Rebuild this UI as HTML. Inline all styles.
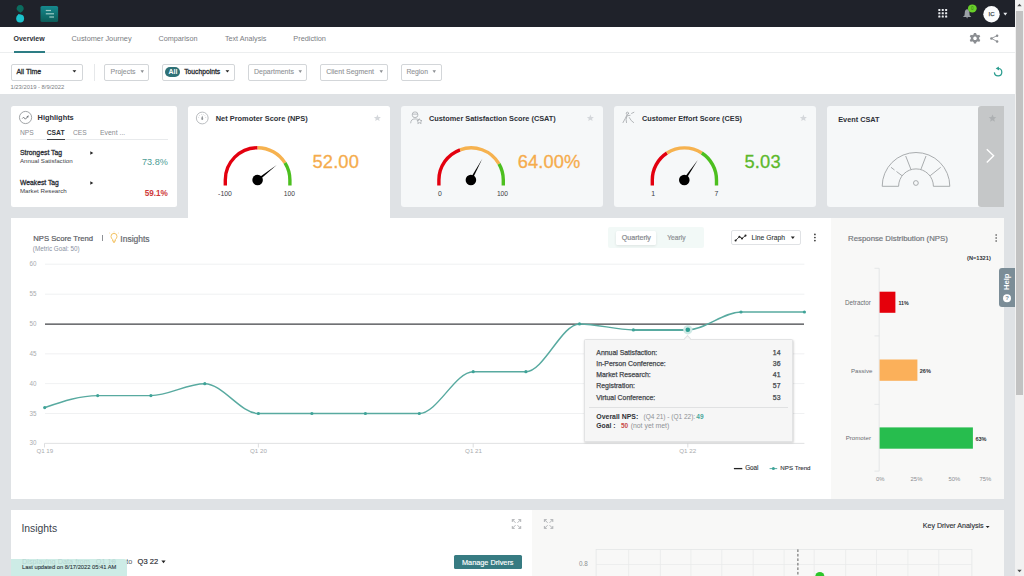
<!DOCTYPE html>
<html><head><meta charset="utf-8">
<style>
*{box-sizing:border-box;margin:0;padding:0}
html,body{width:1024px;height:576px;overflow:hidden;background:#dfe2e5;font-family:"Liberation Sans",sans-serif}
.a{position:absolute}
.t{position:absolute;white-space:nowrap;line-height:1;font-family:"Liberation Sans",sans-serif}
.b{font-weight:700}
svg{position:absolute;overflow:visible}
</style></head><body>
<!-- page area -->
<div class="a" style="left:0;top:0;width:1015px;height:576px;background:#dfe2e5"></div>
<!-- header -->
<div class="a" style="left:0;top:0;width:1015px;height:27px;background:#1f222a"></div>
<!-- logo -->
<svg style="left:0;top:0" width="70" height="27">
  <path d="M20.5,12.7 Q17.6,11.6 16.7,9.6 A3.6,3.6 0 1 1 23.6,9.6 Q23.1,11.4 20.5,12.7 Z" fill="#0b6c5f"/>
  <circle cx="20.15" cy="18.5" r="3.95" fill="#1bc2cc"/>
  <path d="M18,16 L18.2,14.1 Q20.8,14.6 22.6,15.8 Z" fill="#1bc2cc"/>
  <defs><linearGradient id="mg" x1="0" y1="0" x2="0" y2="1"><stop offset="0" stop-color="#168a8f"/><stop offset="1" stop-color="#0c5c58"/></linearGradient></defs>
  <rect x="40.5" y="5.9" width="17.6" height="16.1" rx="1.6" fill="url(#mg)"/>
  <rect x="45.8" y="9.9" width="5.2" height="1.2" fill="#9ccbc6"/>
  <rect x="45.8" y="13.2" width="8.2" height="1.2" fill="#9ccbc6"/>
  <rect x="49.3" y="16.4" width="4.7" height="1.2" fill="#9ccbc6"/>
</svg>
<!-- header right icons -->
<svg style="left:930px;top:0" width="85" height="27">
  <g fill="#e9ecef">
    <rect x="8.3" y="8.9" width="2.1" height="2.1" rx=".4"/><rect x="11.7" y="8.9" width="2.1" height="2.1" rx=".4"/><rect x="15.1" y="8.9" width="2.1" height="2.1" rx=".4"/>
    <rect x="8.3" y="12.2" width="2.1" height="2.1" rx=".4"/><rect x="11.7" y="12.2" width="2.1" height="2.1" rx=".4"/><rect x="15.1" y="12.2" width="2.1" height="2.1" rx=".4"/>
    <rect x="8.3" y="15.5" width="2.1" height="2.1" rx=".4"/><rect x="11.7" y="15.5" width="2.1" height="2.1" rx=".4"/><rect x="15.1" y="15.5" width="2.1" height="2.1" rx=".4"/>
  </g>
  <path d="M37.1,9.2 Q34.9,9.5 34.8,12.6 L34.5,15.4 Q33.4,16.3 33,17 L41.2,17 Q40.8,16.3 39.7,15.4 L39.4,12.6 Q39.3,9.5 37.1,9.2 Z M36.1,17.3 L38.1,17.3 L37.1,18.4 Z" fill="#9ba1a6"/>
  <ellipse cx="42.3" cy="8.4" rx="4.4" ry="4" fill="#68cf29"/>
  <text x="42.3" y="10.1" font-size="4.6" text-anchor="middle" fill="#3a7a1c" font-family="Liberation Sans">0</text>
  <circle cx="61.5" cy="14.2" r="8.2" fill="#fbfcfd"/>
  <text x="61.5" y="15.9" font-size="6" text-anchor="middle" fill="#3d4a50" stroke="#3d4a50" stroke-width=".25" font-family="Liberation Sans">IC</text>
  <path d="M73.3,12.8 L77.3,12.8 L75.3,15.6 Z" fill="#e9ecef"/>
</svg>
<!-- nav bar -->
<div class="a" style="left:0;top:27px;width:1015px;height:67px;background:#fff"></div>
<div class="a" style="left:0;top:52px;width:1015px;height:1px;background:#eceeef"></div>
<div class="t b" style="left:13.5px;top:34.9px;font-size:7px;color:#2c2f36">Overview</div>
<div class="a" style="left:13.5px;top:51px;width:31.5px;height:1.8px;background:#2d7d84"></div>
<div class="t" style="left:71.5px;top:34.6px;font-size:7.36px;color:#7a7d82">Customer Journey</div>
<div class="t" style="left:158.4px;top:34.6px;font-size:7.25px;color:#7a7d82">Comparison</div>
<div class="t" style="left:224.9px;top:35.1px;font-size:7.2px;color:#7a7d82">Text Analysis</div>
<div class="t" style="left:293.3px;top:34.6px;font-size:7.35px;color:#7a7d82">Prediction</div>
<!-- gear & share -->
<svg style="left:965px;top:30px" width="40" height="18">
  <g transform="translate(10,8.3)">
    <path fill="#8b8e92" d="M-1.1,-5.3 L1.1,-5.3 L1.4,-3.8 Q2.2,-3.5 2.8,-3 L4.2,-3.6 L5.3,-1.7 L4.1,-0.7 Q4.2,0 4.1,0.7 L5.3,1.7 L4.2,3.6 L2.8,3 Q2.2,3.5 1.4,3.8 L1.1,5.3 L-1.1,5.3 L-1.4,3.8 Q-2.2,3.5 -2.8,3 L-4.2,3.6 L-5.3,1.7 L-4.1,0.7 Q-4.2,0 -4.1,-0.7 L-5.3,-1.7 L-4.2,-3.6 L-2.8,-3 Q-2.2,-3.5 -1.4,-3.8 Z M0,-1.8 A1.8,1.8 0 1 0 0.01,-1.8 Z" fill-rule="evenodd"/>
  </g>
  <g fill="#8b8e92" stroke="#8b8e92">
    <line x1="26.4" y1="8.4" x2="32.1" y2="5.7" stroke-width="0.85"/>
    <line x1="26.4" y1="8.4" x2="32.1" y2="11.5" stroke-width="0.85"/>
    <circle cx="26.4" cy="8.4" r="1.25" stroke="none"/>
    <circle cx="32.1" cy="5.7" r="1.25" stroke="none"/>
    <circle cx="32.1" cy="11.5" r="1.25" stroke="none"/>
  </g>
</svg>
<!-- filters -->
<div class="a" style="left:10.5px;top:63.5px;width:72px;height:17px;border:1px solid #d3d6d9;border-radius:2px;background:#fff"></div>
<div class="t" style="left:16.4px;top:69px;font-size:6.95px;color:#2a2d32;-webkit-text-stroke:.3px #2a2d32">All Time</div>
<svg style="left:72px;top:69px" width="6" height="5"><path d="M0.5,1.2 L4.3,1.2 L2.4,3.6 Z" fill="#222"/></svg>
<div class="a" style="left:93.5px;top:63.5px;width:1px;height:17px;background:#e6e8ea"></div>
<div class="a" style="left:104.3px;top:63.5px;width:44.7px;height:17px;border:1px solid #d3d6d9;border-radius:2px"></div>
<div class="t" style="left:110.6px;top:69.2px;font-size:6.9px;color:#8f9296;-webkit-text-stroke:.1px #8f9296">Projects</div>
<svg style="left:139.8px;top:69.3px" width="6" height="5"><path d="M0.5,1.3 L4,1.3 L2.25,3.9 Z" fill="#8d9094"/></svg>
<div class="a" style="left:162.2px;top:63.5px;width:72.8px;height:17px;border:1px solid #d3d6d9;border-radius:2px"></div>
<div class="a" style="left:165.1px;top:66.6px;width:14.8px;height:10.2px;border-radius:5.1px;background:#2e7176"></div>
<div class="t b" style="left:168.5px;top:68.6px;font-size:6.9px;color:#fff">All</div>
<div class="t" style="left:184.2px;top:69px;font-size:6.75px;color:#2a2d32;-webkit-text-stroke:.3px #2a2d32">Touchpoints</div>
<svg style="left:225px;top:69px" width="6" height="5"><path d="M0.5,1.2 L4.3,1.2 L2.4,3.6 Z" fill="#222"/></svg>
<div class="a" style="left:248.2px;top:63.5px;width:59.3px;height:17px;border:1px solid #d3d6d9;border-radius:2px"></div>
<div class="t" style="left:254px;top:69.2px;font-size:6.97px;color:#8f9296;-webkit-text-stroke:.1px #8f9296">Departments</div>
<svg style="left:298.3px;top:69.3px" width="6" height="5"><path d="M0.5,1.3 L4,1.3 L2.25,3.9 Z" fill="#8d9094"/></svg>
<div class="a" style="left:320.4px;top:63.5px;width:67.2px;height:17px;border:1px solid #d3d6d9;border-radius:2px"></div>
<div class="t" style="left:326.2px;top:68.4px;font-size:7px;color:#8f9296;-webkit-text-stroke:.1px #8f9296">Client Segment</div>
<svg style="left:378.7px;top:69.3px" width="6" height="5"><path d="M0.5,1.3 L4,1.3 L2.25,3.9 Z" fill="#8d9094"/></svg>
<div class="a" style="left:400.5px;top:63.5px;width:41px;height:17px;border:1px solid #d3d6d9;border-radius:2px"></div>
<div class="t" style="left:406.4px;top:69.2px;font-size:6.8px;color:#8f9296;-webkit-text-stroke:.1px #8f9296">Region</div>
<svg style="left:432.3px;top:69.3px" width="6" height="5"><path d="M0.5,1.3 L4,1.3 L2.25,3.9 Z" fill="#8d9094"/></svg>
<div class="t" style="left:10.5px;top:85.1px;font-size:5.84px;color:#7b7e83">1/23/2019 - 8/9/2022</div>
<!-- refresh -->
<svg style="left:990px;top:63px" width="16" height="16">
  <path d="M4.4,9.4 A3.7,3.7 0 1 0 8.3,5.5" fill="none" stroke="#2a9d8f" stroke-width="1.25"/>
  <path d="M5.7,5.5 L8.8,3.5 L9.1,7.6 Z" fill="#2a9d8f"/>
</svg>

<!-- Highlights card -->
<div class="a" style="left:11px;top:106px;width:166px;height:100.5px;background:#fff;border-radius:2.5px"></div>
<svg style="left:11px;top:106px" width="30" height="30">
  <circle cx="14.55" cy="11.5" r="6.1" fill="none" stroke="#8a8e92" stroke-width="0.8"/>
  <path d="M11.3,12.5 L12.6,11.2 L14.4,13.2 L16.4,11" fill="none" stroke="#6a6e73" stroke-width="0.9"/>
  <path d="M15.5,10.6 L17.8,9.2 L17.1,11.7 Z" fill="#6a6e73"/>
</svg>
<div class="t b" style="left:37.6px;top:113.6px;font-size:7.4px;color:#2e3138">Highlights</div>
<div class="t" style="left:20px;top:129.8px;font-size:6.66px;color:#8a8d91">NPS</div>
<div class="t b" style="left:46.7px;top:129.8px;font-size:6.76px;color:#2e3138">CSAT</div>
<div class="t" style="left:73px;top:129.8px;font-size:6.66px;color:#8a8d91">CES</div>
<div class="t" style="left:100px;top:129.8px;font-size:6.9px;color:#8a8d91">Event ...</div>
<div class="a" style="left:20px;top:139.3px;width:148.4px;height:0.8px;background:#e8eaec"></div>
<div class="a" style="left:46.7px;top:138.9px;width:18.2px;height:1.3px;background:#3a3d42"></div>
<div class="t" style="left:20px;top:150px;font-size:6.85px;color:#2e3138;-webkit-text-stroke:.3px #2e3138">Strongest Tag</div>
<div class="t" style="left:20px;top:157.5px;font-size:6.15px;color:#3e4147">Annual Satisfaction</div>
<svg style="left:89px;top:149px" width="6" height="7"><path d="M1.3,2.3 L4.3,4 L1.3,5.8 Z" fill="#222"/></svg>
<div class="t" style="left:142px;top:158px;font-size:9.1px;color:#4b9d95">73.8%</div>
<div class="t" style="left:20px;top:179.8px;font-size:6.75px;color:#2e3138;-webkit-text-stroke:.3px #2e3138">Weakest Tag</div>
<div class="t" style="left:20px;top:187.9px;font-size:6.15px;color:#3e4147">Market Research</div>
<svg style="left:89px;top:179px" width="6" height="7"><path d="M1.3,2.3 L4.3,4 L1.3,5.8 Z" fill="#222"/></svg>
<div class="t" style="left:144.7px;top:190.4px;font-size:8.2px;color:#cf3a3a;font-weight:700">59.1%</div>

<!-- NPS card (selected, merges to panel) -->
<div class="a" style="left:188px;top:105.6px;width:202.3px;height:113px;background:#fff;border-radius:2.5px 2.5px 0 0"></div>
<svg style="left:188px;top:106px" width="30" height="30">
  <circle cx="14.25" cy="12" r="5.9" fill="none" stroke="#a9adb1" stroke-width="0.8"/>
  <path d="M14.25,9.4 Q15.4,12.2 15.2,13.1 A0.95,0.95 0 0 1 13.3,13.1 Q13.1,12.2 14.25,9.4 Z" fill="#8f9397"/>
  <g fill="#b4b8bc"><circle cx="10.7" cy="11.3" r=".45"/><circle cx="11.6" cy="9.6" r=".45"/><circle cx="13.3" cy="8.4" r=".45"/><circle cx="15.2" cy="8.4" r=".45"/><circle cx="16.9" cy="9.6" r=".45"/><circle cx="17.8" cy="11.3" r=".45"/></g>
</svg>
<div class="t b" style="left:215.7px;top:114.9px;font-size:7.43px;color:#2e3138">Net Promoter Score (NPS)</div>
<svg style="left:370px;top:110px" width="15" height="15"><path d="M7.4,4.6 L8.4,6.9 L10.9,7.1 L9,8.7 L9.6,11.1 L7.4,9.8 L5.2,11.1 L5.8,8.7 L3.9,7.1 L6.4,6.9 Z" fill="#d4d7db"/></svg>
<!-- NPS gauge: center 257.6,180 r=32.3 (centerline) -->
<svg style="left:0;top:0" width="400" height="220">
  <g fill="none" stroke-width="3.4">
    <path d="M225.3,185.6 L225.3,180 A32.3,32.3 0 0 1 257.6,147.7" stroke="#e3000f"/>
    <path d="M257.6,147.7 A32.3,32.3 0 0 1 285,162.9" stroke="#f6b24f"/>
    <path d="M285,162.9 A32.3,32.3 0 0 1 289.9,180 L289.9,185.6" stroke="#4cbf1f"/>
  </g>
  <path d="M256.9,179 L276.7,165 L258.3,181 Z" fill="#000"/>
  <circle cx="257.6" cy="180" r="5.3" fill="#000"/>
</svg>
<div class="t" style="left:218.1px;top:190.6px;font-size:6.9px;color:#3b3e44">-100</div>
<div class="t" style="left:283.7px;top:190.6px;font-size:6.7px;color:#3b3e44">100</div>
<div class="t" style="left:312.5px;top:153.2px;font-size:18.3px;letter-spacing:.15px;color:#f5ac4c;-webkit-text-stroke:.3px #f5ac4c">52.00</div>

<!-- CSAT card -->
<div class="a" style="left:401px;top:105.6px;width:202px;height:101px;background:#f6f8f9;border-radius:3px"></div>
<svg style="left:401px;top:106px" width="30" height="30">
  <g fill="none" stroke="#a3a7ab" stroke-width="0.75">
    <path d="M11.3,8.2 Q11.3,5.9 14,5.9 Q16.8,5.9 16.8,8.2 L16.8,9.3 Q16.8,11.6 14,11.6 Q11.3,11.6 11.3,9.3 Z"/>
    <path d="M11.3,8.1 L16.8,8.1"/>
    <path d="M9.7,17.3 Q9.7,13 14,12.9 Q16.5,12.9 18,13.8"/>
    <path d="M18.4,12.7 L19.2,14.4 L21,14.6 L19.7,15.8 L20.1,17.6 L18.4,16.7 L16.8,17.6 L17.2,15.8 L15.9,14.6 L17.7,14.4 Z"/>
  </g>
</svg>
<div class="t b" style="left:429px;top:114.9px;font-size:7.35px;color:#2e3138">Customer Satisfaction Score (CSAT)</div>
<svg style="left:583px;top:110px" width="15" height="15"><path d="M7.4,4.6 L8.4,6.9 L10.9,7.1 L9,8.7 L9.6,11.1 L7.4,9.8 L5.2,11.1 L5.8,8.7 L3.9,7.1 L6.4,6.9 Z" fill="#d4d7db"/></svg>
<svg style="left:0;top:0" width="620" height="220">
  <g fill="none" stroke-width="3.4">
    <path d="M438.9,185.6 L438.9,180 A32.2,32.2 0 0 1 460.1,149.8" stroke="#e3000f"/>
    <path d="M460.1,149.8 A32.2,32.2 0 0 1 499,163.9" stroke="#f6b24f"/>
    <path d="M499,163.9 A32.2,32.2 0 0 1 503.3,180 L503.3,185.6" stroke="#4cbf1f"/>
  </g>
  <path d="M469.8,179.4 L482.3,158.7 L471.8,180.6 Z" fill="#000"/>
  <circle cx="470.9" cy="180" r="5.3" fill="#000"/>
</svg>
<div class="t" style="left:438px;top:190.6px;font-size:6.9px;color:#3b3e44">0</div>
<div class="t" style="left:496.9px;top:190.6px;font-size:6.7px;color:#3b3e44">100</div>
<div class="t" style="left:517.8px;top:153.2px;font-size:18.3px;letter-spacing:.1px;color:#f5ac4c;-webkit-text-stroke:.3px #f5ac4c">64.00%</div>

<!-- CES card -->
<div class="a" style="left:614px;top:105.6px;width:202px;height:101px;background:#f6f8f9;border-radius:3px"></div>
<svg style="left:614px;top:106px" width="30" height="30">
  <g fill="none" stroke="#a6aaae" stroke-width="0.85" stroke-linecap="round">
    <circle cx="13.4" cy="7.3" r="1.15"/>
    <path d="M13,8.9 L11.2,12.6 L9,16.6 M12.9,10.2 L12.1,13.3 L12.5,16.6 M13.3,9.8 L16.1,9.3 M17.6,7.4 L19.9,6.3 M15.3,11.6 Q16.9,15.1 19.6,16.6"/>
  </g>
</svg>
<div class="t b" style="left:642px;top:114.9px;font-size:7.32px;color:#2e3138">Customer Effort Score (CES)</div>
<svg style="left:796px;top:110px" width="15" height="15"><path d="M7.4,4.6 L8.4,6.9 L10.9,7.1 L9,8.7 L9.6,11.1 L7.4,9.8 L5.2,11.1 L5.8,8.7 L3.9,7.1 L6.4,6.9 Z" fill="#d4d7db"/></svg>
<svg style="left:0;top:0" width="830" height="220">
  <g fill="none" stroke-width="3.4">
    <path d="M652.3,185.6 L652.3,180 A32.1,32.1 0 0 1 667,153" stroke="#e3000f"/>
    <path d="M667,153 A32.1,32.1 0 0 1 701.8,153" stroke="#f6b24f"/>
    <path d="M701.8,153 A32.1,32.1 0 0 1 716.5,180 L716.5,185.6" stroke="#4cbf1f"/>
  </g>
  <path d="M683.2,179.3 L697.8,160 L685.1,180.7 Z" fill="#000"/>
  <circle cx="684.3" cy="180" r="5.3" fill="#000"/>
</svg>
<div class="t" style="left:651.3px;top:190.6px;font-size:6.9px;color:#3b3e44">1</div>
<div class="t" style="left:714.6px;top:190.6px;font-size:6.9px;color:#3b3e44">7</div>
<div class="t" style="left:744.4px;top:153.2px;font-size:18.3px;letter-spacing:.2px;color:#5cb82b;-webkit-text-stroke:.3px #5cb82b">5.03</div>

<!-- Event CSAT card -->
<div class="a" style="left:827px;top:105.8px;width:177px;height:101px;background:#f6f8f9;border-radius:3px 0 0 3px"></div>
<div class="a" style="left:978px;top:105.8px;width:25.8px;height:101px;background:#c5c7c8;border-radius:3px 0 0 3px"></div>
<div class="t b" style="left:838.2px;top:115.8px;font-size:7.33px;color:#2e3138">Event CSAT</div>
<svg style="left:985px;top:111px" width="15" height="15"><path d="M7.5,3.6 L8.6,6.1 L11.3,6.3 L9.2,8.1 L9.9,10.7 L7.5,9.3 L5.1,10.7 L5.8,8.1 L3.7,6.3 L6.4,6.1 Z" fill="#adb0b2"/></svg>
<svg style="left:980px;top:145px" width="20" height="20"><path d="M6.8,4.2 L13.6,10.8 L6.8,17.4" fill="none" stroke="#fff" stroke-width="1.4"/></svg>
<svg style="left:0;top:0" width="1000" height="220">
  <g fill="none" stroke="#9b9ea1" stroke-width="0.85">
    <path d="M882.2,186.3 A33.8,33.8 0 0 1 949.8,186.3 L933.4,186.3 A17.4,17.4 0 0 0 898.6,186.3 Z"/>
    <circle cx="915.9" cy="183" r="2.4"/>
    <path d="M891,167.3 L894.5,170 M896.5,171.5 L902,175.7"/>
    <path d="M905.7,156 L911,169.6"/>
    <path d="M926,156 L920.8,169.6"/>
    <path d="M940.7,167.3 L930.2,175.7"/>
  </g>
</svg>

<!-- Chart panel -->
<div class="a" style="left:11px;top:217.5px;width:993px;height:281px;background:#fff"></div>
<div class="a" style="left:830.8px;top:217.5px;width:173.2px;height:281px;background:#f8f8f7"></div>
<div class="t" style="left:33.3px;top:235.4px;font-size:7.7px;color:#5d6066;-webkit-text-stroke:.22px #5d6066">NPS Score Trend</div>
<div class="a" style="left:101.9px;top:235.1px;width:0.9px;height:5.9px;background:#8e9196"></div>
<svg style="left:108px;top:230px" width="14" height="14">
  <g fill="none" stroke="#f0b43c" stroke-width="0.8">
    <path d="M4.7,9.6 Q3,8.2 3,6.4 A3,3 0 0 1 9,6.4 Q9,8.2 7.3,9.6 L7.3,11.2 L4.7,11.2 Z"/>
    <path d="M5,12.2 L7,12.2"/>
    <path d="M1.3,2.9 L2.1,3.5 M6,1.6 L6,2.3 M10.7,2.9 L9.9,3.5" stroke-width="0.6"/>
  </g>
</svg>
<div class="t" style="left:120.3px;top:234.7px;font-size:8.5px;color:#686b70;-webkit-text-stroke:.22px #686b70">Insights</div>
<div class="t" style="left:32.8px;top:245.5px;font-size:6.3px;color:#8a92a2">(Metric Goal: 50)</div>
<!-- toggle -->
<div class="a" style="left:608.2px;top:227px;width:95.6px;height:21px;background:#f2f9f7;border-radius:2px"></div>
<div class="a" style="left:616px;top:230.5px;width:40.2px;height:14.8px;background:#fff;border-radius:1.5px;box-shadow:0 1px 3px rgba(0,0,0,0.09)"></div>
<div class="t" style="left:621.8px;top:234.6px;font-size:7.08px;color:#86898d;-webkit-text-stroke:.2px #86898d">Quarterly</div>
<div class="t" style="left:667.3px;top:234.6px;font-size:6.63px;color:#8e9195;-webkit-text-stroke:.2px #8e9195">Yearly</div>
<!-- line graph dropdown -->
<div class="a" style="left:730.5px;top:230px;width:70.1px;height:15.3px;border:0.8px solid #e0e2e5;border-radius:2px;background:#fff"></div>
<svg style="left:733px;top:233px" width="16" height="10">
  <path d="M2.6,7.5 L6.4,3.7 L9,5.5 L12.5,2.6" fill="none" stroke="#222" stroke-width="0.85"/>
  <g fill="#222"><circle cx="2.6" cy="7.5" r="1.05"/><circle cx="6.4" cy="3.7" r="1.05"/><circle cx="9" cy="5.5" r="1.05"/><circle cx="12.5" cy="2.6" r="1.05"/></g>
</svg>
<div class="t" style="left:751.6px;top:235.2px;font-size:6.77px;color:#2b2e33;-webkit-text-stroke:.08px #2b2e33">Line Graph</div>
<svg style="left:789px;top:235px" width="8" height="6"><path d="M1.8,1.6 L5.8,1.6 L3.8,4 Z" fill="#222"/></svg>
<svg style="left:812px;top:232px" width="6" height="12"><g fill="#333"><circle cx="2.9" cy="2.4" r=".85"/><circle cx="2.9" cy="5.5" r=".85"/><circle cx="2.9" cy="8.6" r=".85"/></g></svg>

<!-- line chart -->
<svg style="left:0;top:0" width="830" height="500">
  <g stroke="#eceeef" stroke-width="0.8">
    <line x1="45" y1="264.2" x2="804.4" y2="264.2"/>
    <line x1="45" y1="294.2" x2="804.4" y2="294.2"/>
    <line x1="45" y1="353.8" x2="804.4" y2="353.8"/>
    <line x1="45" y1="383.6" x2="804.4" y2="383.6"/>
    <line x1="45" y1="413.5" x2="804.4" y2="413.5"/>
  </g>
  <line x1="44.5" y1="443.4" x2="804.4" y2="443.4" stroke="#dcdee0" stroke-width="0.9"/>
  <g stroke="#d4d6d8" stroke-width="0.8">
    <line x1="44.5" y1="443.4" x2="44.5" y2="447.5"/>
    <line x1="258.4" y1="443.4" x2="258.4" y2="447.5"/>
    <line x1="473.2" y1="443.4" x2="473.2" y2="447.5"/>
    <line x1="687.8" y1="443.4" x2="687.8" y2="447.5"/>
  </g>
  <line x1="45" y1="324.1" x2="804" y2="324.1" stroke="#404246" stroke-width="1.2"/>
  <path d="M44.7,407.6 C62.4,401.6 80.0,395.6 97.7,395.6 C115.4,395.6 133.2,395.6 150.9,395.6 C168.9,395.6 186.8,383.7 204.8,383.7 C222.7,383.7 240.5,413.5 258.4,413.5 C276.2,413.5 294.1,413.5 311.9,413.5 C329.7,413.5 347.6,413.5 365.4,413.5 C383.4,413.5 401.3,413.5 419.3,413.5 C437.3,413.5 455.2,371.7 473.2,371.7 C490.8,371.7 508.3,371.7 525.9,371.7 C543.8,371.7 561.6,323.9 579.5,323.9 C597.5,323.9 615.4,329.9 633.4,329.9 C651.5,329.9 669.7,329.9 687.8,329.9 C705.5,329.9 723.3,312.0 741.0,312.0 C762.1,312.0 783.3,312.0 804.4,312.0" fill="none" stroke="#58aaa0" stroke-width="1.45"/>
  <path d="M633.4,329.9 L687.8,329.9" stroke="#58aaa0" stroke-width="2"/>
  <g fill="#3fa398">
    <circle cx="44.7" cy="407.6" r="1.6"/><circle cx="97.7" cy="395.6" r="1.6"/><circle cx="150.9" cy="395.6" r="1.6"/><circle cx="204.8" cy="383.7" r="1.6"/><circle cx="258.4" cy="413.5" r="1.6"/><circle cx="311.9" cy="413.5" r="1.6"/><circle cx="365.4" cy="413.5" r="1.6"/><circle cx="419.3" cy="413.5" r="1.6"/><circle cx="473.2" cy="371.7" r="1.6"/><circle cx="525.9" cy="371.7" r="1.6"/><circle cx="579.5" cy="323.9" r="1.6"/><circle cx="633.4" cy="329.9" r="1.6"/><circle cx="741" cy="312" r="1.6"/><circle cx="804.4" cy="312" r="1.6"/>
  </g>
  <circle cx="687.8" cy="329.8" r="4.6" fill="#cfe9e5"/>
  <circle cx="687.8" cy="329.8" r="2.3" fill="#2d9f92"/>
  <!-- legend -->
  <line x1="733.9" y1="468.6" x2="742.3" y2="468.6" stroke="#222" stroke-width="1.3"/>
  <line x1="769.6" y1="468.6" x2="777.2" y2="468.6" stroke="#4aa79d" stroke-width="0.9"/>
  <circle cx="773.4" cy="468.6" r="1.5" fill="#3fa398"/>
</svg>
<!-- y labels -->
<div class="t" style="left:29.4px;top:261.3px;font-size:6.3px;color:#a9abae;letter-spacing:.2px">60</div>
<div class="t" style="left:29.4px;top:291.3px;font-size:6.3px;color:#a9abae;letter-spacing:.2px">55</div>
<div class="t" style="left:29.4px;top:321.2px;font-size:6.3px;color:#a9abae;letter-spacing:.2px">50</div>
<div class="t" style="left:29.4px;top:351px;font-size:6.3px;color:#a9abae;letter-spacing:.2px">45</div>
<div class="t" style="left:29.4px;top:380.8px;font-size:6.3px;color:#a9abae;letter-spacing:.2px">40</div>
<div class="t" style="left:29.4px;top:410.6px;font-size:6.3px;color:#a9abae;letter-spacing:.2px">35</div>
<div class="t" style="left:29.4px;top:440.4px;font-size:6.3px;color:#a9abae;letter-spacing:.2px">30</div>
<div class="t" style="left:36.4px;top:448.2px;font-size:6.2px;color:#a9abae">Q1 19</div>
<div class="t" style="left:250px;top:448.2px;font-size:6.2px;color:#a9abae">Q1 20</div>
<div class="t" style="left:465.1px;top:448.2px;font-size:6.2px;color:#a9abae">Q1 21</div>
<div class="t" style="left:679.3px;top:448.2px;font-size:6.2px;color:#a9abae">Q1 22</div>
<div class="t" style="left:745.2px;top:465.4px;font-size:6.4px;letter-spacing:-.05px;color:#34373c;-webkit-text-stroke:.12px #34373c">Goal</div>
<div class="t" style="left:780.3px;top:465.4px;font-size:6.2px;color:#34373c;-webkit-text-stroke:.12px #34373c">NPS Trend</div>

<!-- tooltip -->
<div class="a" style="left:584px;top:338.5px;width:209.3px;height:103px;background:#f6f6f6;border:0.8px solid #e2e3e4;border-radius:1.5px;box-shadow:0.5px 1px 2px rgba(0,0,0,0.15)"></div>
<div class="a" style="left:685px;top:336px;width:5px;height:5px;background:#f6f6f6;transform:rotate(45deg);border-left:0.8px solid #e2e3e4;border-top:0.8px solid #e2e3e4"></div>
<div class="t" style="left:596.3px;top:349.8px;font-size:6.9px;color:#45484d;-webkit-text-stroke:.25px #45484d">Annual Satisfaction:</div>
<div class="t" style="left:596.3px;top:361px;font-size:6.9px;color:#45484d;-webkit-text-stroke:.25px #45484d">In-Person Conference:</div>
<div class="t" style="left:596.3px;top:372px;font-size:6.9px;color:#45484d;-webkit-text-stroke:.25px #45484d">Market Research:</div>
<div class="t" style="left:596.3px;top:383.2px;font-size:6.9px;color:#45484d;-webkit-text-stroke:.25px #45484d">Registration:</div>
<div class="t" style="left:596.3px;top:394.5px;font-size:6.9px;color:#45484d;-webkit-text-stroke:.25px #45484d">Virtual Conference:</div>
<div class="t" style="left:770px;top:349.8px;width:10.5px;text-align:right;font-size:6.9px;color:#45484d;-webkit-text-stroke:.25px #45484d">14</div>
<div class="t" style="left:770px;top:361px;width:10.5px;text-align:right;font-size:6.9px;color:#45484d;-webkit-text-stroke:.25px #45484d">36</div>
<div class="t" style="left:770px;top:372px;width:10.5px;text-align:right;font-size:6.9px;color:#45484d;-webkit-text-stroke:.25px #45484d">41</div>
<div class="t" style="left:770px;top:383.2px;width:10.5px;text-align:right;font-size:6.9px;color:#45484d;-webkit-text-stroke:.25px #45484d">57</div>
<div class="t" style="left:770px;top:394.5px;width:10.5px;text-align:right;font-size:6.9px;color:#45484d;-webkit-text-stroke:.25px #45484d">53</div>
<div class="a" style="left:588.9px;top:407px;width:199px;height:0.8px;background:#e0e1e2"></div>
<div class="t b" style="left:596.3px;top:413.9px;font-size:6.93px;color:#2f3237">Overall NPS:</div>
<div class="t" style="left:643.5px;top:414.3px;font-size:6.5px;color:#8e9195">(Q4 21) - (Q1 22):</div>
<div class="t b" style="left:696.3px;top:414.3px;font-size:6.5px;color:#49a69b">49</div>
<div class="t b" style="left:596.3px;top:423.1px;font-size:6.74px;color:#2f3237">Goal :</div>
<div class="t b" style="left:621px;top:423.3px;font-size:6.5px;color:#c94a4a">50</div>
<div class="t" style="left:630.7px;top:423.3px;font-size:6.88px;color:#8e9195">(not yet met)</div>

<!-- Response distribution -->
<div class="t" style="left:848.1px;top:235.3px;font-size:7.8px;color:#74777c;-webkit-text-stroke:.2px #74777c">Response Distribution (NPS)</div>
<svg style="left:990px;top:232px" width="12" height="12"><g fill="#333"><circle cx="6.1" cy="3.1" r=".75"/><circle cx="6.1" cy="6.1" r=".75"/><circle cx="6.1" cy="9.1" r=".75"/></g></svg>
<div class="t b" style="left:967.1px;top:256.3px;font-size:5.65px;color:#2e3136">(N=1321)</div>
<svg style="left:830px;top:260px" width="180" height="240">
  <line x1="49.2" y1="8.3" x2="49.2" y2="211.1" stroke="#e0e2e4" stroke-width="0.8"/>
  <g stroke="#e0e2e4" stroke-width="0.8">
    <line x1="44.5" y1="8.3" x2="49.2" y2="8.3"/>
    <line x1="44.5" y1="75.9" x2="49.2" y2="75.9"/>
    <line x1="44.5" y1="144.4" x2="49.2" y2="144.4"/>
    <line x1="44.5" y1="211.1" x2="49.2" y2="211.1"/>
  </g>
  <rect x="49.6" y="31.7" width="15.8" height="21.1" fill="#e5000b"/>
  <rect x="49.6" y="99.5" width="37.8" height="21.3" fill="#fbb05a"/>
  <rect x="49.6" y="167.4" width="93.3" height="21.3" fill="#27bd4e"/>
</svg>
<div class="t" style="left:845px;top:299.6px;font-size:6.3px;color:#6a6d72">Detractor</div>
<div class="t" style="left:851px;top:367.6px;font-size:6.1px;color:#6a6d72">Passive</div>
<div class="t" style="left:845.7px;top:435.2px;font-size:6.15px;color:#6a6d72">Promoter</div>
<div class="t b" style="left:898.4px;top:301.1px;font-size:5.3px;color:#2e3136">11%</div>
<div class="t b" style="left:919.8px;top:369px;font-size:5.5px;color:#2e3136">26%</div>
<div class="t b" style="left:975.5px;top:436.6px;font-size:5.5px;color:#2e3136">63%</div>
<div class="t" style="left:876px;top:476.9px;font-size:5.9px;color:#8b8e92">0%</div>
<div class="t" style="left:910.6px;top:476.9px;font-size:5.9px;color:#8b8e92">25%</div>
<div class="t" style="left:948.4px;top:476.9px;font-size:5.9px;color:#8b8e92">50%</div>
<div class="t" style="left:979.4px;top:476.9px;font-size:5.9px;color:#8b8e92">75%</div>
<!-- bottom panels -->
<div class="a" style="left:11px;top:510px;width:521px;height:66px;background:#fff"></div>
<div class="a" style="left:531.8px;top:510px;width:472.5px;height:66px;background:#f8f8f7"></div>
<div class="t" style="left:21.4px;top:523.8px;font-size:10.4px;color:#3a3f4a">Insights</div>
<svg style="left:0;top:0" width="600" height="576"><g fill="none" stroke="#a9acaf" stroke-width="0.9"><path d="M512.3,522.0 L512.3,519.6 L514.6999999999999,519.6 M512.3,519.6 L515.5,522.8000000000001 M518.3000000000001,519.6 L520.7,519.6 L520.7,522.0 M520.7,519.6 L517.5,522.8000000000001 M512.3,526.0 L512.3,528.4 L514.6999999999999,528.4 M512.3,528.4 L515.5,525.1999999999999 M518.3000000000001,528.4 L520.7,528.4 L520.7,526.0 M520.7,528.4 L517.5,525.1999999999999"/><path d="M544.4,522.0 L544.4,519.6 L546.8,519.6 M544.4,519.6 L547.6,522.8000000000001 M550.4,519.6 L552.8,519.6 L552.8,522.0 M552.8,519.6 L549.5999999999999,522.8000000000001 M544.4,526.0 L544.4,528.4 L546.8,528.4 M544.4,528.4 L547.6,525.1999999999999 M550.4,528.4 L552.8,528.4 L552.8,526.0 M552.8,528.4 L549.5999999999999,525.1999999999999"/></g></svg>
<div class="t" style="left:22px;top:558.3px;font-size:7.3px;color:#a9aeb2">Displaying Data from &nbsp;&nbsp;Q1 19</div><svg style="left:109px;top:559px" width="7" height="6"><path d="M1.4,1.6 L5.6,1.6 L3.5,4.2 Z" fill="#c4c7ca"/></svg>
<div class="t" style="left:126.2px;top:558.4px;font-size:7.3px;color:#55585d">to</div>
<div class="t" style="left:137.6px;top:558px;font-size:7.56px;color:#24272c;-webkit-text-stroke:.15px #24272c">Q3 22</div>
<svg style="left:160px;top:559px" width="7" height="6"><path d="M1.4,1.6 L5.6,1.6 L3.5,4.2 Z" fill="#222"/></svg>
<div class="a" style="left:453.7px;top:555px;width:68px;height:13.8px;background:#377b82;border-radius:1.5px"></div>
<div class="t" style="left:462px;top:558.5px;font-size:7.3px;color:#fff;-webkit-text-stroke:.15px #fff">Manage Drivers</div>
<!-- toast -->
<div class="a" style="left:11px;top:558.9px;width:115.6px;height:20px;background:rgba(186,229,221,0.72);border-radius:0 3px 0 0"></div>
<div class="t" style="left:22px;top:564.9px;font-size:5.75px;color:#2f3a42;-webkit-text-stroke:.12px #2f3a42">Last updated on 8/17/2022 05:41 AM</div>
<!-- key driver -->
<div class="t" style="left:922.8px;top:523px;font-size:7.1px;letter-spacing:-.02px;color:#2b2e33;-webkit-text-stroke:.12px #2b2e33">Key Driver Analysis</div>
<svg style="left:984px;top:524px" width="8" height="6"><path d="M1.7,1.9 L5.6,1.9 L3.65,4 Z" fill="#222"/></svg>
<div class="t" style="left:579px;top:561.3px;font-size:6.3px;color:#8b8e92">0.8</div>
<svg style="left:0;top:0" width="1010" height="576">
  <rect x="596.1" y="549.4" width="375.8" height="40" fill="none" stroke="#e4e6e7" stroke-width="0.8"/>
  <g stroke="#e8e9ea" stroke-width="0.7">
    <line x1="628.6" y1="549.4" x2="628.6" y2="576"/><line x1="660.4" y1="549.4" x2="660.4" y2="576"/><line x1="690.9" y1="549.4" x2="690.9" y2="576"/><line x1="721.8" y1="549.4" x2="721.8" y2="576"/><line x1="753.2" y1="549.4" x2="753.2" y2="576"/><line x1="784.1" y1="549.4" x2="784.1" y2="576"/><line x1="814.2" y1="549.4" x2="814.2" y2="576"/><line x1="845.6" y1="549.4" x2="845.6" y2="576"/><line x1="876.5" y1="549.4" x2="876.5" y2="576"/><line x1="907.9" y1="549.4" x2="907.9" y2="576"/><line x1="938.8" y1="549.4" x2="938.8" y2="576"/>
    <line x1="596.1" y1="564.5" x2="971.9" y2="564.5"/>
  </g>
  <line x1="797.9" y1="549.4" x2="797.9" y2="576" stroke="#444" stroke-width="0.85" stroke-dasharray="2.6,1.9"/>
  <circle cx="819.8" cy="576.5" r="4.6" fill="#2cc62a"/>
</svg>
<!-- help tab -->
<div class="a" style="left:998.8px;top:268.1px;width:16.2px;height:39.4px;background:#7b8d97;border-radius:3px 0 0 3px"></div>
<div class="t b" style="font-size:7.6px;color:#fff;transform:rotate(-90deg);transform-origin:0 0;left:1002.9px;top:290.4px">Help</div>
<svg style="left:1000px;top:291px" width="14" height="14"><circle cx="7" cy="7.2" r="4" fill="#fff"/><text x="7" y="9.4" font-size="6" text-anchor="middle" fill="#7b8d97" font-family="Liberation Sans" font-weight="700">?</text></svg>
<!-- scrollbar -->
<div class="a" style="left:1015px;top:0;width:9px;height:576px;background:#f1f1f1"></div>
<div class="a" style="left:1016.2px;top:11px;width:6.7px;height:383.6px;background:#c2c2c2"></div>
<svg style="left:1015px;top:0" width="9" height="576">
  <path d="M2.3,6.2 L6.7,6.2 L4.5,3.8 Z" fill="#505050"/>
  <path d="M2.3,569.8 L6.7,569.8 L4.5,572.2 Z" fill="#505050"/>
</svg>

</body></html>
